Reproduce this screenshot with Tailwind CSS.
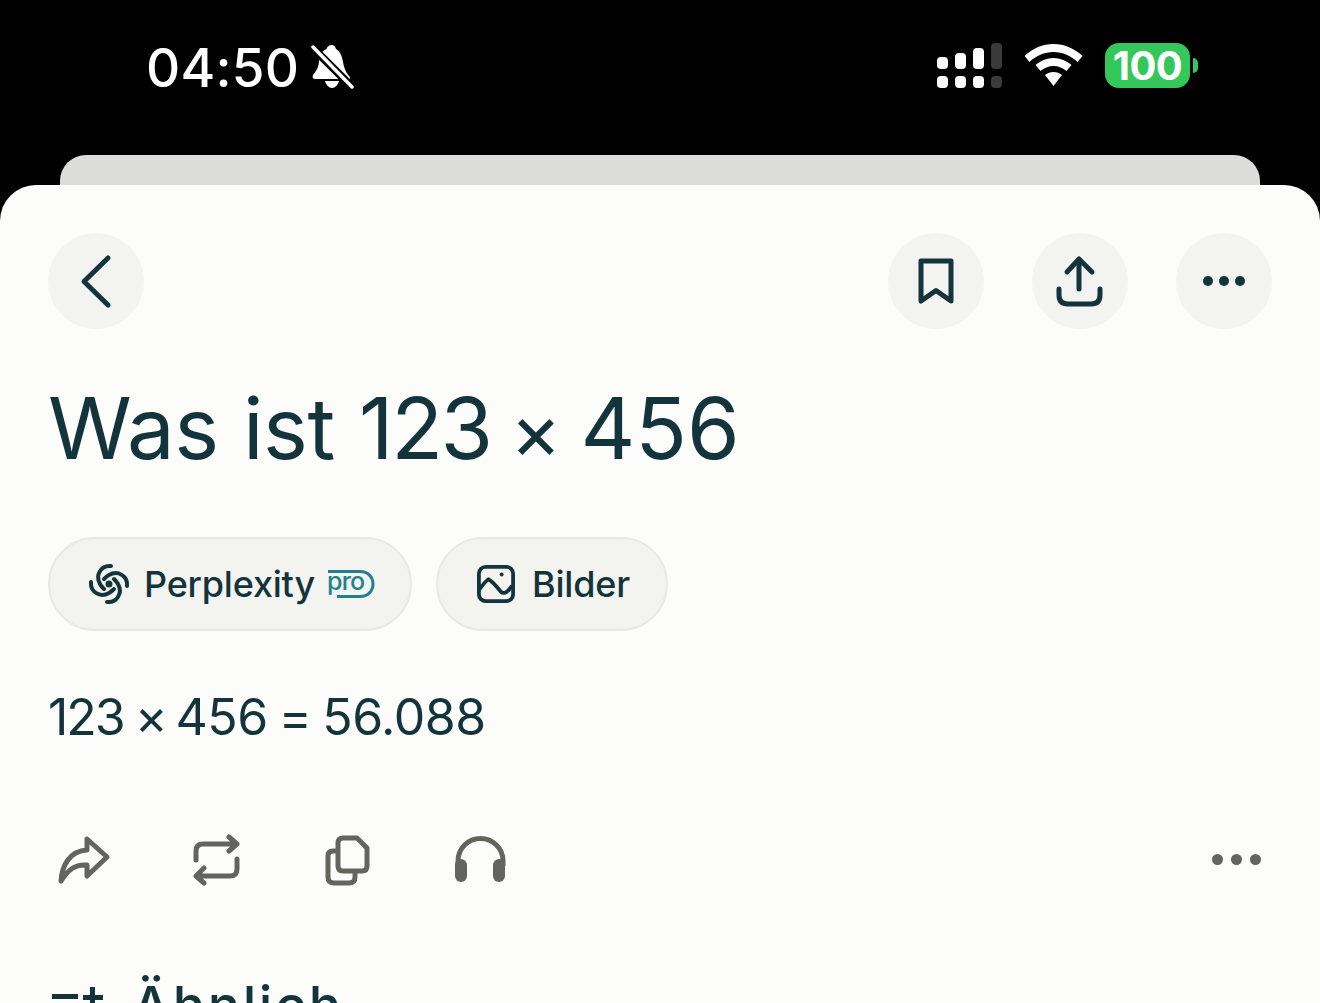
<!DOCTYPE html>
<html lang="de">
<head>
    <meta charset="UTF-8">
    <meta name="viewport" content="width=device-width, initial-scale=1.0">
    <title>Was ist 123 × 456</title>
    <script src="https://cdn.jsdelivr.net/npm/@tailwindcss/browser@4"></script>
</head>
<body class="h-[1003px] overflow-hidden bg-black font-['Inter',sans-serif]">

    <!-- Statusleiste -->
    <div class="h-[155px] flex items-start justify-between pl-[146px] pr-[122px] pt-[43px] text-white">
        <div class="flex items-center h-[46px]">
            <span class="mt-[4px] text-[53px] leading-none font-medium tracking-[0.2px]">04:50</span>
            <svg class="ml-[11px] w-[44px] h-[46px]" viewBox="311 43 44 46">
                <path fill="#fff" d="M333 45c-3 0-5 2-5.500 4-5 2-7 7-7.500 12-.3 6-2 9-6 14-1 2 0 4 2 4h34c1.500 0 1.500-1.500 0-3-4-5-5-9-6-14-1-6-3-11-7-13-.5-2-2-4-4-4z"/>
                <path fill="#fff" d="M326 81h14c-1 4-4 7-7 7s-6-3-7-7z"/>
                <path stroke="#000" stroke-width="8" d="M310 44l44 44"/>
                <path stroke="#fff" stroke-width="3.500" stroke-linecap="round" d="M314 47l39 40"/>
            </svg>
        </div>
        <div class="flex items-start">
            <svg class="w-[66px] h-[46px]" viewBox="937 43 66 46">
                <rect x="937" y="57" width="11" height="12" rx="4" fill="#fff"/>
                <rect x="955" y="53" width="11" height="16" rx="4" fill="#fff"/>
                <rect x="973" y="48" width="11" height="21" rx="4" fill="#fff"/>
                <rect x="991" y="43" width="11" height="26" rx="4" fill="#3a3a3a"/>
                <rect x="937" y="76" width="11" height="12" rx="4" fill="#fff"/>
                <rect x="955" y="76" width="11" height="12" rx="4" fill="#fff"/>
                <rect x="973" y="76" width="11" height="12" rx="4" fill="#fff"/>
                <rect x="991" y="76" width="11" height="12" rx="4" fill="#3a3a3a"/>
            </svg>
            <svg class="ml-[22px] w-[58px] h-[44px] mt-[1px]" viewBox="1025 44 58 44">
                <path fill="#fff" d="M1053.500 44c11 0 21 4.500 29 12l-5 6c-6-6-15-10-24-10s-18 4-24 10l-5-6c8-7.500 18-12 29-12z"/>
                <path fill="#fff" d="M1053.500 58c7 0 13 3 18 7l-5 6c-3.500-3-8-5-13-5s-9.500 2-13 5l-5-6c5-4 11-7 18-7z"/>
                <path fill="#fff" d="M1053.500 72c3.500 0 6 1 8.500 3l-8.500 11-8.500-11c2.500-2 5-3 8.500-3z"/>
            </svg>
            <div class="ml-[22px] flex items-center">
                <div class="w-[85px] h-[45px] rounded-[14px] bg-[#34c759] flex items-center justify-center text-[40px] leading-none font-bold tracking-[-0.5px]">100</div>
                <div class="ml-[3px] w-[5px] h-[15px] rounded-r-full bg-[#34c759]"></div>
            </div>
        </div>
    </div>

    <!-- Blatt dahinter -->
    <div class="mx-[60px] h-[30px] rounded-t-[26px] bg-[#dcdcda]"></div>

    <!-- Hauptblatt -->
    <div class="h-[818px] overflow-hidden rounded-t-[36px] bg-[#fcfcfa] px-[48px] pt-[48px] text-[#13343b]">

        <div class="flex items-center justify-between">
            <button class="w-[96px] h-[96px] rounded-full bg-[#f3f3f2] flex items-center justify-center">
                <svg class="w-[32px] h-[56px]" viewBox="79 254 32 56" fill="none" stroke="#13343b" stroke-width="5" stroke-linecap="round" stroke-linejoin="round"><path d="M107 259L83 282.500L107 306"/></svg>
            </button>
            <div class="flex gap-[48px]">
                <button class="w-[96px] h-[96px] rounded-full bg-[#f3f3f2] flex items-center justify-center">
                    <svg class="w-[40px] h-[52px]" viewBox="916 255 40 52" fill="none" stroke="#13343b" stroke-width="5" stroke-linecap="round" stroke-linejoin="round"><path d="M921 261H951V301L936 290.500L921 301Z"/></svg>
                </button>
                <button class="w-[96px] h-[96px] rounded-full bg-[#f3f3f2] flex items-center justify-center">
                    <svg class="w-[50px] h-[56px]" viewBox="1055 253 50 56" fill="none" stroke="#13343b" stroke-width="5" stroke-linecap="round" stroke-linejoin="round"><path d="M1079 289V259M1067 272L1079 259L1092 272M1059 289V295Q1059 304 1068 304H1091Q1100 304 1100 295V289"/></svg>
                </button>
                <button class="w-[96px] h-[96px] rounded-full bg-[#f3f3f2] flex items-center justify-center gap-[6px]">
                    <span class="w-[10px] h-[10px] rounded-full bg-[#13343b]"></span>
                    <span class="w-[10px] h-[10px] rounded-full bg-[#13343b]"></span>
                    <span class="w-[10px] h-[10px] rounded-full bg-[#13343b]"></span>
                </button>
            </div>
        </div>

        <h1 class="mt-[51px] text-[85px] leading-[98px] font-normal tracking-[-0.5px] [word-spacing:1px]">Was ist <span class="[word-spacing:-4px]"><span class="tracking-[-2.5px]">123</span> <span class="text-[78px] leading-none">×</span> <span class="tracking-[0px]">456</span></span></h1>

        <!-- Tabs -->
        <div class="mt-[59px] flex gap-[24px] text-[36px] font-medium">
            <div class="w-[364px] h-[94px] rounded-full border-2 border-[#e8e8e4] bg-[#f3f3f0] flex items-center pl-[38px]">
                <svg class="w-[42px] h-[42px]" viewBox="0 0 42 42" fill="none" stroke="#13343b" stroke-width="4" stroke-linecap="round">
                    <circle cx="21" cy="21" r="3.500" fill="#13343b" stroke="none"/>
                    <path d="M23 3C13 2 7 12 12 21C13 23 14 24 16 26"/>
                    <path transform="rotate(90 21 21)" d="M23 3C13 2 7 12 12 21C13 23 14 24 16 26"/>
                    <path transform="rotate(180 21 21)" d="M23 3C13 2 7 12 12 21C13 23 14 24 16 26"/>
                    <path transform="rotate(270 21 21)" d="M23 3C13 2 7 12 12 21C13 23 14 24 16 26"/>
                </svg>
                <span class="ml-[14px] tracking-[-0.2px]">Perplexity</span>
                <svg class="ml-[12px] w-[48px] h-[30px] overflow-visible" viewBox="0 0 48 30">
                    <path d="M1 2.500H33C41 2.500 46 8 46 15C46 22 41 27.500 33 27.500H10" fill="none" stroke="#20808d" stroke-width="3"/>
                    <text x="0" y="21" font-family="Inter, sans-serif" font-size="25" font-weight="500" fill="#20808d" letter-spacing="-0.800">pro</text>
                </svg>
            </div>
            <div class="w-[232px] h-[94px] rounded-full border-2 border-[#e8e8e4] bg-[#f3f3f0] flex items-center pl-[39px]">
                <svg class="w-[38px] h-[38px]" viewBox="0 0 40 40" fill="none" stroke="#13343b" stroke-width="4" stroke-linecap="round" stroke-linejoin="round">
                    <rect x="2" y="2" width="36" height="36" rx="7"/>
                    <path d="M3 25C6 21 9 17 12 15C16 17 21 23 25 28C28 31 32 29 36 23"/>
                    <circle cx="26" cy="10" r="2" fill="#13343b" stroke="none"/>
                </svg>
                <span class="ml-[17px] tracking-[-0.2px]">Bilder</span>
            </div>
        </div>

        <p class="mt-[56px] text-[50px] leading-[60px] tracking-[-0.5px] [word-spacing:-2.500px]"><span class="tracking-[-2px]">123</span> × <span class="ml-[-3px]">456 = 56.088</span></p>

        <!-- Aktionen -->
        <div class="mt-[87px] flex items-center justify-between h-[52px]">
            <div class="flex items-center pl-[7px]">
                <svg class="w-[60px] h-[52px]" viewBox="55 834 60 52" fill="none" stroke="#64645f" stroke-width="5" stroke-linecap="round" stroke-linejoin="round"><path d="M87 839L107 857L87 876V865C75 864 68 870 61 881C62 865 70 851 87 850Z"/></svg>
                <svg class="ml-[75px] w-[52px] h-[52px]" viewBox="190 834 52 52" fill="none" stroke="#64645f" stroke-width="5" stroke-linecap="round" stroke-linejoin="round"><path d="M196 860V851Q196 844 203 844H236M229 837L237 844L229 851M237 859V869Q237 876 230 876H197M204 868L196 876L204 883"/></svg>
                <svg class="ml-[80px] w-[52px] h-[52px]" viewBox="322 834 52 52" fill="none" stroke="#64645f" stroke-width="5" stroke-linecap="round" stroke-linejoin="round"><path d="M343 838H357L367 848V866Q367 871 362 871H343Q338 871 338 866V843Q338 838 343 838ZM337 851H333Q328 851 328 856V877Q328 883 334 883H349Q355 883 355 877V873"/></svg>
                <svg class="ml-[80px] w-[52px] h-[52px]" viewBox="454 834 52 52" fill="none"><path d="M458 866V861A22 22 0 0 1 503 861V866" stroke="#64645f" stroke-width="5"/><rect x="455" y="859" width="12" height="23" rx="6" fill="#64645f"/><rect x="493" y="859" width="12" height="23" rx="6" fill="#64645f"/></svg>
            </div>
            <div class="mb-[2px] flex gap-[8px] pr-[11px]">
                <span class="w-[11px] h-[11px] rounded-full bg-[#64645f]"></span>
                <span class="w-[11px] h-[11px] rounded-full bg-[#64645f]"></span>
                <span class="w-[11px] h-[11px] rounded-full bg-[#64645f]"></span>
            </div>
        </div>

        <!-- Ähnlich -->
        <div class="mt-[90px] flex items-start">
            <svg class="mt-[8px] ml-[4px] w-[52px] h-[40px]" viewBox="52 985 52 40" fill="#13343b">
                <rect x="52" y="995" width="26" height="5"/>
                <rect x="83" y="996" width="20" height="5"/>
                <rect x="90" y="988" width="5" height="20"/>
            </svg>
            <span class="ml-[28px] text-[54px] leading-[60px] font-medium tracking-[2.5px]">Ähnlich</span>
        </div>
    </div>
</body>
</html>
